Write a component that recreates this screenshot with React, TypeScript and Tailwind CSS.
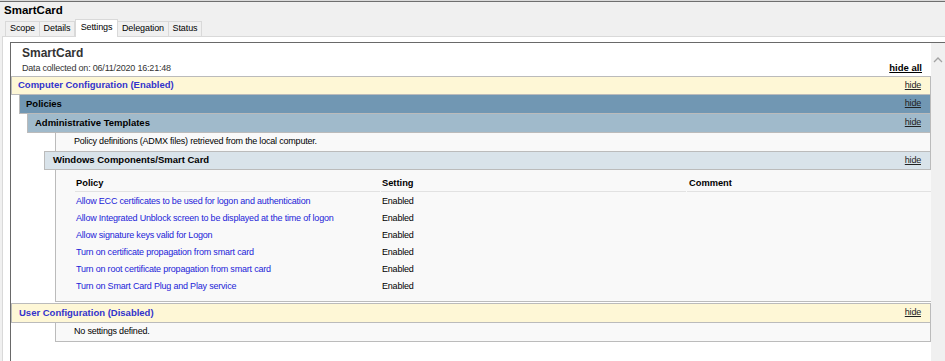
import React from "react";

const policies = [
  "Allow ECC certificates to be used for logon and authentication",
  "Allow Integrated Unblock screen to be displayed at the time of logon",
  "Allow signature keys valid for Logon",
  "Turn on certificate propagation from smart card",
  "Turn on root certificate propagation from smart card",
  "Turn on Smart Card Plug and Play service",
];

function Hide() {
  return (
    <span className="pr-[9px] text-[9px] tracking-[-0.2px] font-normal text-[#222] underline underline-offset-[1px]">
      hide
    </span>
  );
}

export default function App() {
  return (
    <div className="w-[945px] h-[361px] overflow-hidden bg-[#f0f0f0] flex flex-col font-['Liberation_Sans',Arial,sans-serif] text-black">
      <div className="h-px bg-[#dadada]" />
      <div className="h-px bg-[#6f6f6f]" />
      {/* title */}
      <div className="h-[17px] leading-[17px] pl-[4px] text-[11.5px] font-bold text-black">SmartCard</div>
      {/* tabs */}
      <div className="h-[17px] flex items-end pl-[5px] relative z-10 text-[9px] tracking-[-0.1px]">
        <div className="h-[15px] w-[35px] border border-b-0 border-[#d9d9d9] flex items-center justify-center">Scope</div>
        <div className="h-[15px] w-[35px] border border-b-0 border-l-0 border-[#d9d9d9] flex items-center justify-center">Details</div>
        <div className="h-[18px] -mb-px w-[43px] bg-white border border-b-0 border-[#d9d9d9] flex items-center justify-center pb-[2px]">Settings</div>
        <div className="h-[15px] w-[51px] border border-b-0 border-l-0 border-[#d9d9d9] flex items-center justify-center">Delegation</div>
        <div className="h-[15px] w-[33px] border border-b-0 border-l-0 border-[#d9d9d9] flex items-center justify-center">Status</div>
      </div>
      {/* panel */}
      <div className="flex-1 ml-[2px] bg-white border-t border-l border-[#d9d9d9] pt-[5px] pl-[7px] flex flex-col min-h-0">
        <div className="flex-1 flex border-t border-l border-[#696969] min-h-0">
          {/* content */}
          <div className="w-[920px] bg-white flex flex-col">
            {/* header */}
            <div className="h-[33px] pl-[11px] flex flex-col">
              <div className="mt-[2px] h-[16px] leading-[16px] text-[12px] font-bold text-[#333]">SmartCard</div>
              <div className="mt-[1px] h-[13px] flex items-center justify-between">
                <span className="text-[9px] tracking-[-0.2px] text-[#333]">Data collected on: 06/11/2020 16:21:48</span>
                <span className="pr-[9px] text-[9.5px] font-bold underline underline-offset-[1px]">hide all</span>
              </div>
            </div>
            {/* Computer Configuration */}
            <div className="h-[19px] border border-[#bbbbbb] bg-[#fef7d6] flex items-center justify-between pl-[6px]">
              <span className="text-[9.5px] font-bold text-[#3333cc]">Computer Configuration (Enabled)</span>
              <Hide />
            </div>
            <div className="-mt-px ml-[8px] h-[20px] border border-[#bbbbbb] bg-[#7197b3] flex items-center justify-between pl-[6px]">
              <span className="text-[9.5px] font-bold">Policies</span>
              <Hide />
            </div>
            <div className="-mt-px ml-[16px] h-[20px] border border-[#bbbbbb] bg-[#a0bacb] flex items-center justify-between pl-[7px]">
              <span className="text-[9.5px] font-bold">Administrative Templates</span>
              <Hide />
            </div>
            <div className="-mt-px ml-[44px] h-[20px] border border-[#bbbbbb] bg-[#f9f9f9] flex items-center pl-[18px]">
              <span className="text-[9px] tracking-[-0.2px]">Policy definitions (ADMX files) retrieved from the local computer.</span>
            </div>
            <div className="-mt-px ml-[33px] h-[19px] border border-[#bbbbbb] bg-[#d9e3ea] flex items-center justify-between pl-[8px]">
              <span className="text-[9.5px] font-bold">Windows Components/Smart Card</span>
              <Hide />
            </div>
            {/* table */}
            <div className="ml-[44px] border-l border-b border-[#bbbbbb] bg-[#f9f9f9] pt-[5px] pb-[7px] pl-[19px]">
              <div className="grid grid-cols-[305px_305px_1fr] gap-x-px">
                <div className="h-[17px] leading-[17px] border-b border-[#e2e2e2] pl-[1px] text-[9.3px] font-bold">Policy</div>
                <div className="h-[17px] leading-[17px] border-b border-[#e2e2e2] pl-[1px] text-[9.3px] font-bold">Setting</div>
                <div className="h-[17px] leading-[17px] border-b border-[#e2e2e2] pl-[2px] text-[9.3px] font-bold">Comment</div>
                {policies.map((p) => (
                  <React.Fragment key={p}>
                    <div className="h-[17px] leading-[19px] pl-[1px] text-[9px] tracking-[-0.2px] text-[#2323d8]">{p}</div>
                    <div className="h-[17px] leading-[19px] pl-[1px] text-[9px] tracking-[-0.2px]">Enabled</div>
                    <div className="h-[17px]" />
                  </React.Fragment>
                ))}
              </div>
            </div>
            {/* User Configuration */}
            <div className="mt-[1px] h-[20px] border border-[#bbbbbb] bg-[#fef7d6] flex items-center justify-between pl-[7px]">
              <span className="text-[9.5px] font-bold text-[#3333cc]">User Configuration (Disabled)</span>
              <Hide />
            </div>
            <div className="-mt-px ml-[44px] h-[20px] border border-[#bbbbbb] bg-[#f9f9f9] flex items-center pl-[18px]">
              <span className="text-[9px] tracking-[-0.2px]">No settings defined.</span>
            </div>
          </div>
          {/* scrollbar */}
          <div className="w-[14px] bg-[#f0f0f0] flex flex-col items-center pt-[14px]">
            <svg width="10" height="6" viewBox="0 0 10 6">
              <path d="M1 5 L5 1 L9 5" fill="none" stroke="#a3a3a3" strokeWidth="1.3" />
            </svg>
          </div>
        </div>
      </div>
    </div>
  );
}
